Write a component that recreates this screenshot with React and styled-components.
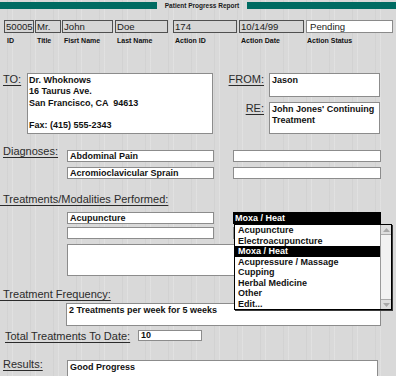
import React from 'react';
import styled, { createGlobalStyle } from 'styled-components';

const Global = createGlobalStyle`
  html, body { margin: 0; padding: 0; background: #d9d9d9; }
  body { font-family: "Liberation Sans", Arial, sans-serif; }
`;

const Page = styled.div`
  width: 396px;
  height: 376px;
  overflow: hidden;
  display: flex;
  flex-direction: column;
  background-color: #d9d9d9;
  background-image: repeating-linear-gradient(
    90deg,
    transparent 0 7px,
    rgba(0, 0, 0, 0.03) 7px 8px,
    transparent 8px 12px,
    rgba(255, 255, 255, 0.2) 12px 13px,
    transparent 13px 23px
  );
`;

const Header = styled.div`
  margin-top: 2px;
  height: 7px;
  display: grid;
  grid-template-columns: 157px 90px 1fr;
  align-items: center;
`;

const TealBar = styled.div`
  height: 7px;
  background: #006b62;
`;

const ReportTitle = styled.div`
  font-size: 6.5px;
  line-height: 7px;
  font-weight: bold;
  text-align: center;
  white-space: nowrap;
  color: #1a1a1a;
`;

const FieldGrid = styled.div`
  margin-top: 11px;
  padding-left: 4px;
  display: grid;
  grid-template-columns: 31px 27px 53px 58px 66px 67px 88px;
  grid-template-rows: 13px 9px;
  row-gap: 3px;
`;

const HeadField = styled.div`
  box-sizing: border-box;
  width: ${(p) => p.$w}px;
  height: 13px;
  padding-left: ${(p) => (p.$white ? 3 : 1)}px;
  border: 1px solid ${(p) => (p.$white ? '#8a8a8a' : '#505050')};
  background: ${(p) => (p.$white ? '#fff' : '#d6d6d6')};
  font-size: 9.6px;
  line-height: 11px;
  color: #222;
  white-space: nowrap;
  overflow: hidden;
`;

const HeadLabel = styled.div`
  padding-left: ${(p) => p.$pl ?? 2}px;
  font-size: 7px;
  line-height: 9px;
  font-weight: bold;
  color: #111;
  white-space: nowrap;
`;

const Label = styled.div`
  font-size: 11px;
  line-height: 13px;
  color: #2b2b2b;
  text-decoration: underline;
  text-underline-offset: 2px;
  white-space: nowrap;
  grid-column: ${(p) => p.$col || 'auto'};
  grid-row: ${(p) => p.$row || 'auto'};
  justify-self: ${(p) => (p.$right ? 'end' : 'start')};
  padding-right: ${(p) => (p.$right ? 5 : 0)}px;
  margin-top: ${(p) => p.$mt || 0}px;
  width: ${(p) => (p.$w ? p.$w + 'px' : 'auto')};
  flex: none;
`;

const Box = styled.div`
  box-sizing: border-box;
  background: #fff;
  border: 1px solid #8c8c8c;
  padding: ${(p) => p.$pad || '0 2px'};
  font-size: 9px;
  font-weight: bold;
  line-height: ${(p) => p.$lh || 10}px;
  color: #111;
  white-space: pre-wrap;
  overflow: hidden;
  height: ${(p) => (p.$h ? p.$h + 'px' : 'auto')};
  width: ${(p) => (p.$w ? p.$w + 'px' : 'auto')};
  grid-column: ${(p) => p.$col || 'auto'};
  grid-row: ${(p) => p.$row || 'auto'};
  align-self: ${(p) => p.$align || 'stretch'};
  margin-top: ${(p) => p.$mt || 0}px;
  flex: none;
`;

const AddressGrid = styled.div`
  margin-top: 28px;
  padding-left: 3px;
  display: grid;
  grid-template-columns: 24px 186px 56px 111px;
  grid-template-rows: 24px 32px;
  row-gap: 5px;
`;

const PairGrid = styled.div`
  margin-top: ${(p) => p.$mt}px;
  padding-left: 3px;
  display: grid;
  grid-template-columns: 64px 147px 19px 148px;
  grid-template-rows: ${(p) => p.$rows};
  row-gap: ${(p) => p.$gap}px;
`;

const SelectBar = styled.div`
  position: relative;
  grid-column: 4;
  grid-row: 1;
  background: #000;
  color: #fff;
  font-size: 9px;
  font-weight: bold;
  line-height: 12px;
  padding-left: 2px;
`;

const Popup = styled.div`
  position: absolute;
  top: 12px;
  left: 1px;
  z-index: 5;
  box-sizing: border-box;
  width: 158px;
  height: 86px;
  display: flex;
  background: #fff;
  border: 1px solid #000;
  box-shadow: 1px 1px 0 #3a3a3a;
`;

const Options = styled.div`
  flex: 1;
  display: flex;
  flex-direction: column;
`;

const Option = styled.div`
  height: 10.5px;
  line-height: 10.5px;
  padding-left: 3px;
  font-size: 9px;
  font-weight: bold;
  white-space: nowrap;
  color: ${(p) => (p.$on ? '#fff' : '#111')};
  background: ${(p) => (p.$on ? '#000' : 'transparent')};
`;

const ScrollBar = styled.div`
  width: 10px;
  display: flex;
  flex-direction: column;
  justify-content: space-between;
  background: #f2f2f2;
  border-left: 1px solid #9a9a9a;
`;

const ScrollBtn = styled.div`
  height: 9px;
  display: flex;
  align-items: center;
  justify-content: center;
  background: #dedede;
  border-bottom: ${(p) => (p.$down ? 'none' : '1px solid #aaa')};
  border-top: ${(p) => (p.$down ? '1px solid #aaa' : 'none')};
`;

const FreqBox = styled(Box)`
  margin-left: 66px;
`;

const TotalRow = styled.div`
  margin-top: 4px;
  padding-left: 5px;
  height: 14px;
  display: flex;
  align-items: center;
`;

const ResultsRow = styled.div`
  margin-top: 15px;
  padding-left: 3px;
  display: flex;
  align-items: flex-start;
`;

const Arrow = ({ down }) => (
  <svg width="7" height="4" viewBox="0 0 7 4">
    <path d={down ? 'M0 0 L7 0 L3.5 4 Z' : 'M0 4 L7 4 L3.5 0 Z'} fill="#a8a8a8" />
  </svg>
);

const headFields = [
  { w: 30, v: '50005' },
  { w: 26, v: 'Mr.' },
  { w: 51, v: 'John' },
  { w: 53, v: 'Doe' },
  { w: 64, v: '174' },
  { w: 65, v: '10/14/99' },
  { w: 87, v: 'Pending', white: true },
];

const headLabels = ['ID', 'Title', 'Fisrt Name', 'Last Name', 'Action ID', 'Action Date', 'Action Status'];

const options = [
  'Acupuncture',
  'Electroacupuncture',
  'Moxa / Heat',
  'Acupressure / Massage',
  'Cupping',
  'Herbal Medicine',
  'Other',
  'Edit...',
];

export default function App() {
  return (
    <Page>
      <Global />
      <Header>
        <TealBar />
        <ReportTitle>Patient Progress Report</ReportTitle>
        <TealBar />
      </Header>

      <FieldGrid>
        {headFields.map((f) => (
          <HeadField key={f.v} $w={f.w} $white={f.white}>
            {f.v}
          </HeadField>
        ))}
        {headLabels.map((l, i) => (
          <HeadLabel key={l} $pl={i === 0 ? 3 : i === 6 ? 1 : 2}>
            {l}
          </HeadLabel>
        ))}
      </FieldGrid>

      <AddressGrid>
        <Label $col="1" $row="1">TO:</Label>
        <Box $col="2" $row="1 / span 2" $lh={11.25} $pad="1px 1px 0">
          {'Dr. Whoknows\n16 Taurus Ave.\nSan Francisco, CA  94613\n\nFax: (415) 555-2343'}
        </Box>
        <Label $col="3" $row="1" $right>FROM:</Label>
        <Box $col="4" $row="1" $lh={11} $pad="1px 2px 0">Jason</Box>
        <Label $col="3" $row="2" $right>RE:</Label>
        <Box $col="4" $row="2" $lh={11} $pad="1px 2px 0">
          {"John Jones' Continuing\nTreatment"}
        </Box>
      </AddressGrid>

      <PairGrid $mt={16} $rows="12px 12px" $gap={5}>
        <Label $col="1" $row="1" $mt={-5}>Diagnoses:</Label>
        <Box $col="2" $row="1">Abdominal Pain</Box>
        <Box $col="4" $row="1" />
        <Box $col="2" $row="2">Acromioclavicular Sprain</Box>
        <Box $col="4" $row="2" />
      </PairGrid>

      <Label $mt={14}>&nbsp;Treatments/Modalities Performed:</Label>

      <PairGrid $mt={6} $rows="12px 12px 34px" $gap={3}>
        <Box $col="2" $row="1">Acupuncture</Box>
        <SelectBar>
          Moxa / Heat
          <Popup>
            <Options>
              {options.map((o) => (
                <Option key={o} $on={o === 'Moxa / Heat'}>
                  {o}
                </Option>
              ))}
            </Options>
            <ScrollBar>
              <ScrollBtn>
                <Arrow />
              </ScrollBtn>
              <ScrollBtn $down>
                <Arrow down />
              </ScrollBtn>
            </ScrollBar>
          </Popup>
        </SelectBar>
        <Box $col="2" $row="2" />
        <Box $col="4" $row="2" />
        <Box $col="2 / span 3" $row="3" $h={32} $align="end" />
      </PairGrid>

      <Label $mt={12}>&nbsp;Treatment Frequency:</Label>
      <FreqBox $w={315} $h={23} $mt={2} $pad="1px 2px 0" $lh={11}>
        2 Treatments per week for 5 weeks
      </FreqBox>

      <TotalRow>
        <Label $w={133}>Total Treatments To Date:</Label>
        <Box $w={64} $h={11} $lh={9}>10</Box>
      </TotalRow>

      <ResultsRow>
        <Label $w={64}>Results:</Label>
        <Box $w={311} $h={30} $mt={2} $lh={11} $pad="1px 2px 0">Good Progress</Box>
      </ResultsRow>
    </Page>
  );
}
